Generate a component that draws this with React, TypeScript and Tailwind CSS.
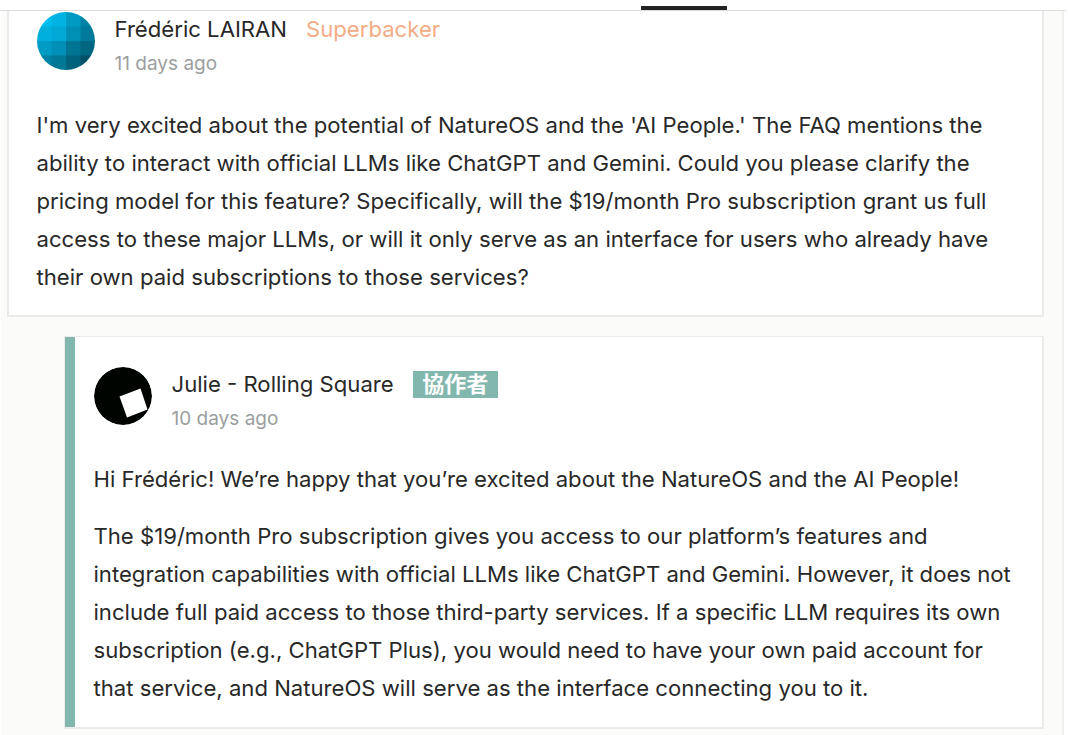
import type { ReactNode } from 'react'

const question = [
  "I'm very excited about the potential of NatureOS and the 'AI People.' The FAQ mentions the",
  'ability to interact with official LLMs like ChatGPT and Gemini. Could you please clarify the',
  'pricing model for this feature? Specifically, will the $19/month Pro subscription grant us full',
  'access to these major LLMs, or will it only serve as an interface for users who already have',
  'their own paid subscriptions to those services?',
]

const greeting = ['Hi Frédéric! We’re happy that you’re excited about the NatureOS and the AI People!']

const answer = [
  'The $19/month Pro subscription gives you access to our platform’s features and',
  'integration capabilities with official LLMs like ChatGPT and Gemini. However, it does not',
  'include full paid access to those third-party services. If a specific LLM requires its own',
  'subscription (e.g., ChatGPT Plus), you would need to have your own paid account for',
  'that service, and NatureOS will serve as the interface connecting you to it.',
]

// Avatar tiles, row by row
const tiles = [
  '#00bdef', '#00b3e2', '#009ac3', '#0083a6',
  '#00afdc', '#00a9d5', '#0090b6', '#007a9a',
  '#009bc4', '#0090b7', '#007593', '#006782',
  '#0083a5', '#007896', '#00627c', '#005168',
]

function TileAvatar() {
  return (
    <svg viewBox="0 0 58 58" className="size-[58px] shrink-0 rounded-full">
      {tiles.map((fill, i) => (
        <rect key={i} x={(i % 4) * 14.5} y={Math.floor(i / 4) * 14.5} width="15" height="15" fill={fill} />
      ))}
    </svg>
  )
}

function SquareAvatar() {
  return (
    <svg viewBox="0 0 58 58" className="size-[58px] shrink-0 rounded-full">
      <circle cx="29" cy="29" r="29" fill="#000401" />
      <path d="M25.5 29.5 L46.5 21.5 L53.5 42.5 L33 50.5 Z" fill="#fff" />
    </svg>
  )
}

type HeaderProps = {
  avatar: ReactNode
  name: string
  date: string
  badge: ReactNode
}

function CommentHeader({ avatar, name, date, badge }: HeaderProps) {
  return (
    <div className="flex h-[66px] gap-5">
      {avatar}
      <div className="whitespace-nowrap">
        <div className="mt-px flex h-[34px] items-center gap-[19px] text-[22.14px]">
          <span>{name}</span>
          {badge}
        </div>
        <div className="pt-px text-[19px] leading-[31px] text-[#9b9e9e]">{date}</div>
      </div>
    </div>
  )
}

function Paragraph({ lines }: { lines: string[] }) {
  return (
    <p className="text-[22.14px] leading-[38.1px]">
      {lines.map((line) => (
        <span key={line} className="block whitespace-nowrap">{line}</span>
      ))}
    </p>
  )
}

export default function App() {
  return (
    <div className="flex h-[735px] w-[1068px] flex-col overflow-hidden bg-white font-['Inter','Noto_Sans_CJK_TC',sans-serif] text-[#282828]">
      {/* Bottom edge of the tab bar with the active tab marker */}
      <div className="h-[11px] w-[1066px] shrink-0 border-b border-[#dcdcdc] pt-[6px] pl-[641px]">
        <div className="h-1 w-[86px] bg-[#222222]" />
      </div>

      <div className="ml-px h-[724px] w-[1063px] border-r-2 border-[#efefed] bg-[#fbfbf9] pl-[6px]">
        <div className="h-[306px] w-[1037px] border-2 border-t-0 border-[#ebebea] bg-white pt-px pl-[27.5px]">
          <CommentHeader
            avatar={<TileAvatar />}
            name="Frédéric LAIRAN"
            date="11 days ago"
            badge={<span className="text-[#f3ac85]">Superbacker</span>}
          />
          <div className="mt-[28px]">
            <Paragraph lines={question} />
          </div>
        </div>

        <div className="mt-[19px] ml-[57px] flex h-[393px] w-[980px] border border-r-2 border-b-2 border-[#ebebea] bg-white">
          <div className="w-[10px] shrink-0 bg-[#82b7ae]" />
          <div className="pt-[30px] pl-[18.5px]">
            <CommentHeader
              avatar={<SquareAvatar />}
              name="Julie - Rolling Square"
              date="10 days ago"
              badge={
                <span className="mb-[2px] flex h-[27px] w-[85px] items-center justify-center bg-[#82b7ae] text-[22px] leading-none font-bold text-white">
                  協作者
                </span>
              }
            />
            <div className="mt-[27px] flex flex-col gap-[19px]">
              <Paragraph lines={greeting} />
              <Paragraph lines={answer} />
            </div>
          </div>
        </div>
      </div>
    </div>
  )
}
